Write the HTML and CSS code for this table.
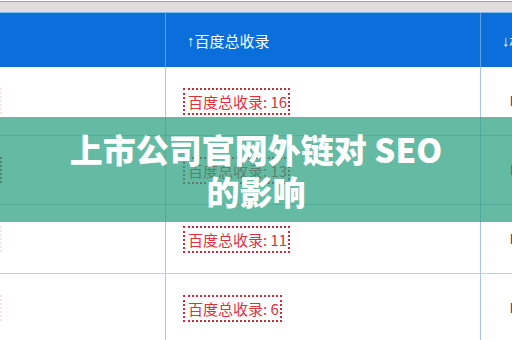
FILE: index.html
```html
<!DOCTYPE html>
<html lang="zh-CN">
<head>
<meta charset="utf-8">
<title>上市公司官网外链对 SEO 的影响</title>
<link rel="stylesheet" href="styles.css">
</head>
<body>
<div class="page">
  <div class="topbar"></div>
  <div class="table">
    <div class="row head">
      <div class="cell c1"></div>
      <div class="cell c2"><span class="arrow">↑</span>百度总收录</div>
      <div class="cell c3"><span class="arrow">↓</span>权重</div>
    </div>
    <div class="row">
      <div class="cell c1"><span class="stub faint"></span></div>
      <div class="cell c2"><span class="tag">百度总收录: 16</span></div>
      <div class="cell c3"><span class="mark">PR</span></div>
    </div>
    <div class="row">
      <div class="cell c1"><span class="stub"></span></div>
      <div class="cell c2"><span class="tag">百度总收录: 13</span></div>
      <div class="cell c3"><span class="mark">PR</span></div>
    </div>
    <div class="row">
      <div class="cell c1"><span class="stub faint"></span></div>
      <div class="cell c2"><span class="tag">百度总收录: 11</span></div>
      <div class="cell c3"><span class="mark">PR</span></div>
    </div>
    <div class="row">
      <div class="cell c1"><span class="stub faint"></span></div>
      <div class="cell c2"><span class="tag">百度总收录: 6</span></div>
      <div class="cell c3"><span class="mark">PR</span></div>
    </div>
  </div>
  <div class="banner">
    <h1 class="title">上市公司官网外链对 SEO<br>的影响</h1>
  </div>
</div>
</body>
</html>
```
FILE: styles.css
```css
html, body {
  margin: 0;
  padding: 0;
  background: #ffffff;
}
.page {
  position: relative;
  width: 512px;
  height: 340px;
  overflow: hidden;
  font-family: "Noto Sans CJK SC", "Noto Sans", sans-serif;
}
.topbar {
  height: 10px;
  margin-top: 1px;
  border-top: 1px solid #86a9dc;
  background: #dedede;
}
.table {
  display: flex;
  flex-direction: column;
}
.row {
  display: grid;
  grid-template-columns: 166px 315px 80px;
  height: 68px;
  border-bottom: 1px solid #b9d1ee;
}
.cell {
  display: flex;
  align-items: center;
  border-right: 1px solid #a9c6ec;
  box-sizing: border-box;
}
.c3 {
  border-right: none;
}
.head {
  height: 54px;
  border-top: 1px solid #86bdf0;
  border-bottom: none;
  background: #0a6edb;
}
.head .cell {
  border-right-color: #5c9fe6;
  color: #ffffff;
  font-size: 15px;
  padding-left: 21px;
}
.head .c1 {
  padding-left: 0;
}
.arrow {
  font-family: "Liberation Sans", sans-serif;
  margin-right: 0;
}
.c2 {
  padding-left: 17px;
}
.tag {
  display: inline-block;
  border: 2px dotted #cf2a3a;
  padding: 0 1px 0 3px;
  font-size: 15px;
  line-height: 23px;
  color: #e0303d;
}
.c3 .mark {
  padding-left: 29px;
  font-family: "Liberation Sans", sans-serif;
  font-weight: bold;
  font-size: 14px;
  color: #505050;
}
.stub {
  display: block;
  width: 0;
  height: 26px;
  border-right: 2px dotted #c9343f;
}
.stub.faint {
  border-right-color: #f7e4ea;
}
.banner {
  position: absolute;
  left: 0;
  top: 117px;
  width: 512px;
  height: 105px;
  display: flex;
  align-items: center;
  justify-content: center;
  background: rgba(42, 159, 129, 0.72);
}
.title {
  margin: 0;
  color: #ffffff;
  font-family: "Noto Sans CJK SC", sans-serif;
  font-weight: 900;
  font-size: 33px;
  line-height: 42px;
  text-align: center;
}
```
